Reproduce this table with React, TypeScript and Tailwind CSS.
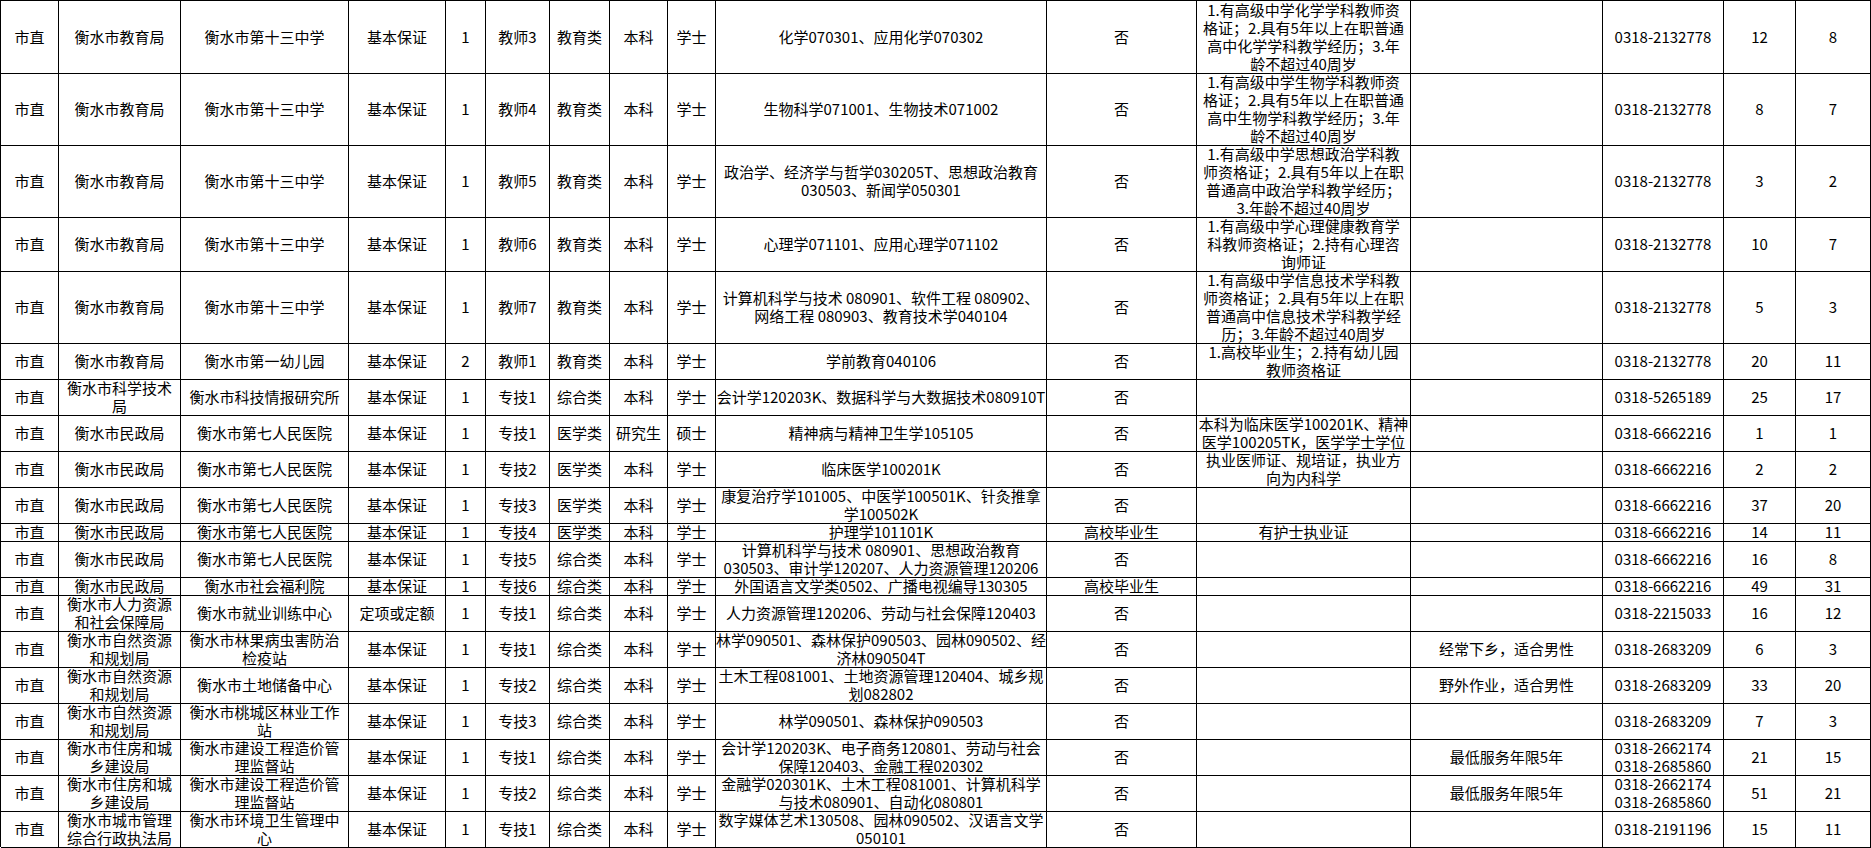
import React from "react"

// One row = [height in px, cells after the leading "市直"]
type Row = [number, string[]]

const rows: Row[] = [
  [72, ["衡水市教育局", "衡水市第十三中学", "基本保证", "1", "教师3", "教育类", "本科", "学士", "化学070301、应用化学070302", "否", "1.有高级中学化学学科教师资\n格证；2.具有5年以上在职普通\n高中化学学科教学经历；3.年\n龄不超过40周岁", "", "0318-2132778", "12", "8"]],
  [72, ["衡水市教育局", "衡水市第十三中学", "基本保证", "1", "教师4", "教育类", "本科", "学士", "生物科学071001、生物技术071002", "否", "1.有高级中学生物学科教师资\n格证；2.具有5年以上在职普通\n高中生物学科教学经历；3.年\n龄不超过40周岁", "", "0318-2132778", "8", "7"]],
  [72, ["衡水市教育局", "衡水市第十三中学", "基本保证", "1", "教师5", "教育类", "本科", "学士", "政治学、经济学与哲学030205T、思想政治教育\n030503、新闻学050301", "否", "1.有高级中学思想政治学科教\n师资格证；2.具有5年以上在职\n普通高中政治学科教学经历；\n3.年龄不超过40周岁", "", "0318-2132778", "3", "2"]],
  [54, ["衡水市教育局", "衡水市第十三中学", "基本保证", "1", "教师6", "教育类", "本科", "学士", "心理学071101、应用心理学071102", "否", "1.有高级中学心理健康教育学\n科教师资格证；2.持有心理咨\n询师证", "", "0318-2132778", "10", "7"]],
  [72, ["衡水市教育局", "衡水市第十三中学", "基本保证", "1", "教师7", "教育类", "本科", "学士", "计算机科学与技术 080901、软件工程 080902、\n网络工程 080903、教育技术学040104", "否", "1.有高级中学信息技术学科教\n师资格证；2.具有5年以上在职\n普通高中信息技术学科教学经\n历；3.年龄不超过40周岁", "", "0318-2132778", "5", "3"]],
  [36, ["衡水市教育局", "衡水市第一幼儿园", "基本保证", "2", "教师1", "教育类", "本科", "学士", "学前教育040106", "否", "1.高校毕业生；2.持有幼儿园\n教师资格证", "", "0318-2132778", "20", "11"]],
  [36, ["衡水市科学技术\n局", "衡水市科技情报研究所", "基本保证", "1", "专技1", "综合类", "本科", "学士", "会计学120203K、数据科学与大数据技术080910T", "否", "", "", "0318-5265189", "25", "17"]],
  [36, ["衡水市民政局", "衡水市第七人民医院", "基本保证", "1", "专技1", "医学类", "研究生", "硕士", "精神病与精神卫生学105105", "否", "本科为临床医学100201K、精神\n医学100205TK，医学学士学位", "", "0318-6662216", "1", "1"]],
  [36, ["衡水市民政局", "衡水市第七人民医院", "基本保证", "1", "专技2", "医学类", "本科", "学士", "临床医学100201K", "否", "执业医师证、规培证，执业方\n向为内科学", "", "0318-6662216", "2", "2"]],
  [36, ["衡水市民政局", "衡水市第七人民医院", "基本保证", "1", "专技3", "医学类", "本科", "学士", "康复治疗学101005、中医学100501K、针灸推拿\n学100502K", "否", "", "", "0318-6662216", "37", "20"]],
  [18, ["衡水市民政局", "衡水市第七人民医院", "基本保证", "1", "专技4", "医学类", "本科", "学士", "护理学101101K", "高校毕业生", "有护士执业证", "", "0318-6662216", "14", "11"]],
  [36, ["衡水市民政局", "衡水市第七人民医院", "基本保证", "1", "专技5", "综合类", "本科", "学士", "计算机科学与技术 080901、思想政治教育\n030503、审计学120207、人力资源管理120206", "否", "", "", "0318-6662216", "16", "8"]],
  [18, ["衡水市民政局", "衡水市社会福利院", "基本保证", "1", "专技6", "综合类", "本科", "学士", "外国语言文学类0502、广播电视编导130305", "高校毕业生", "", "", "0318-6662216", "49", "31"]],
  [36, ["衡水市人力资源\n和社会保障局", "衡水市就业训练中心", "定项或定额", "1", "专技1", "综合类", "本科", "学士", "人力资源管理120206、劳动与社会保障120403", "否", "", "", "0318-2215033", "16", "12"]],
  [36, ["衡水市自然资源\n和规划局", "衡水市林果病虫害防治\n检疫站", "基本保证", "1", "专技1", "综合类", "本科", "学士", "林学090501、森林保护090503、园林090502、经\n济林090504T", "否", "", "经常下乡，适合男性", "0318-2683209", "6", "3"]],
  [36, ["衡水市自然资源\n和规划局", "衡水市土地储备中心", "基本保证", "1", "专技2", "综合类", "本科", "学士", "土木工程081001、土地资源管理120404、城乡规\n划082802", "否", "", "野外作业，适合男性", "0318-2683209", "33", "20"]],
  [36, ["衡水市自然资源\n和规划局", "衡水市桃城区林业工作\n站", "基本保证", "1", "专技3", "综合类", "本科", "学士", "林学090501、森林保护090503", "否", "", "", "0318-2683209", "7", "3"]],
  [36, ["衡水市住房和城\n乡建设局", "衡水市建设工程造价管\n理监督站", "基本保证", "1", "专技1", "综合类", "本科", "学士", "会计学120203K、电子商务120801、劳动与社会\n保障120403、金融工程020302", "否", "", "最低服务年限5年", "0318-2662174\n0318-2685860", "21", "15"]],
  [36, ["衡水市住房和城\n乡建设局", "衡水市建设工程造价管\n理监督站", "基本保证", "1", "专技2", "综合类", "本科", "学士", "金融学020301K、土木工程081001、计算机科学\n与技术080901、自动化080801", "否", "", "最低服务年限5年", "0318-2662174\n0318-2685860", "51", "21"]],
  [36, ["衡水市城市管理\n综合行政执法局", "衡水市环境卫生管理中\n心", "基本保证", "1", "专技1", "综合类", "本科", "学士", "数字媒体艺术130508、园林090502、汉语言文学\n050101", "否", "", "", "0318-2191196", "15", "11"]],
]

function Cell({ text }: { text: string }) {
  return (
    <div className="flex flex-col items-center justify-center text-center border-r border-b border-black min-w-0">
      {text.split("\n").map((line, i) =>
        line ? (
          <div key={i} className="whitespace-nowrap">
            {line}
          </div>
        ) : null
      )}
    </div>
  )
}

export default function App() {
  return (
    <div className="w-[1871px] h-[848px] bg-white overflow-hidden">
      <div className="border-l border-t border-black text-black text-[15px] leading-[18px] font-['Noto_Sans_CJK_SC','Noto_Sans',sans-serif]">
        {rows.map(([h, cells], idx) => (
          <div
            key={idx}
            className="grid grid-cols-[58px_122px_168px_97px_40px_64px_60px_58px_48px_331px_150px_214px_192px_121px_72px_75px]"
            style={{ height: h }}
          >
            <Cell text="市直" />
            {cells.map((c, i) => (
              <Cell key={i} text={c} />
            ))}
          </div>
        ))}
      </div>
    </div>
  )
}
